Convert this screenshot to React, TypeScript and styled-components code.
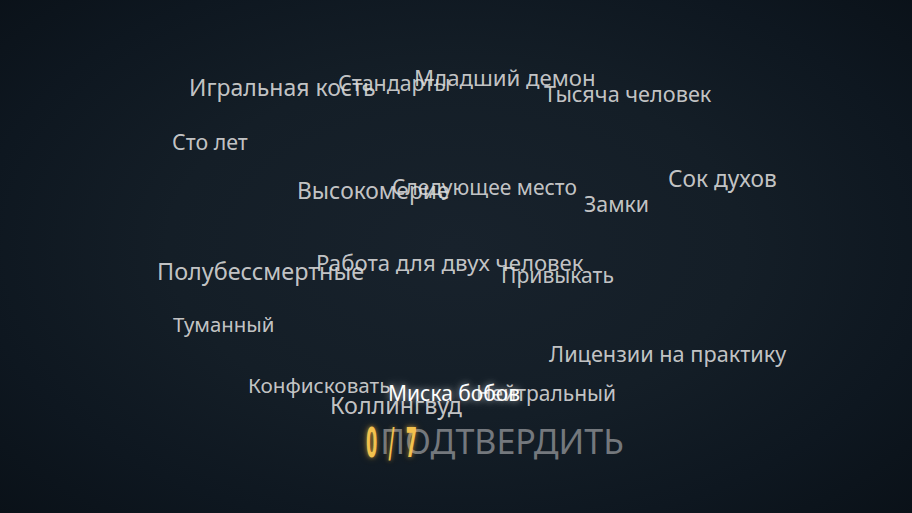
import React from "react";
import styled, { createGlobalStyle } from "styled-components";

const GlobalStyle = createGlobalStyle`
  html, body {
    margin: 0;
    padding: 0;
    width: 100%;
    height: 100%;
    overflow: hidden;
    background: #0b131a;
  }
  #root {
    width: 100%;
    height: 100%;
  }
`;

const Stage = styled.main`
  display: grid;
  width: 912px;
  height: 513px;
  overflow: hidden;
  background: radial-gradient(
    ellipse 70% 75% at 50% 48%,
    #18222c 0%,
    #141e27 45%,
    #0e1720 75%,
    #0a1118 100%
  );
  font-family: "Noto Sans", "Open Sans", sans-serif;
`;

const WordField = styled.section`
  grid-area: 1 / 1;
  position: relative;
`;

type WordProps = {
  $x: number;
  $base: number;
  $size: number;
  $picked?: boolean;
};

const Word = styled.span<WordProps>`
  position: absolute;
  left: ${(p) => p.$x}px;
  top: calc(${(p) => p.$base}px - 0.89em);
  font-size: ${(p) => p.$size}px;
  line-height: 1;
  white-space: nowrap;
  color: ${(p) => (p.$picked ? "#ffffff" : "rgba(218, 218, 218, 0.9)")};
  text-shadow: ${(p) =>
    p.$picked
      ? "0 0 6px rgba(255,255,255,0.55), 0 0 14px rgba(255,255,255,0.25)"
      : "none"};
  z-index: ${(p) => (p.$picked ? 2 : 1)};
  cursor: pointer;
`;

const Footer = styled.footer`
  grid-area: 1 / 1;
  align-self: end;
  display: flex;
  justify-content: center;
  align-items: center;
  padding: 0 0 52px 78px;
  z-index: 3;
`;

const Counter = styled.span`
  position: relative;
  top: 2px;
  z-index: 2;
  width: 50px;
  margin-right: -36px;
  font-family: "DejaVu Sans Condensed", "DejaVu Sans", sans-serif;
  font-weight: bold;
  font-size: 40px;
  line-height: 1;
  letter-spacing: 25px;
  white-space: nowrap;
  color: #f3c24e;
  text-shadow: 0 0 6px rgba(243, 180, 60, 0.65), 0 0 14px rgba(243, 180, 60, 0.3);
  transform: scaleX(0.45);
  transform-origin: left center;
`;

const ConfirmButton = styled.button`
  border: 0;
  padding: 0;
  background: none;
  font-family: "Noto Sans", "Open Sans", sans-serif;
  font-size: 34px;
  line-height: 1;
  color: #74787d;
  cursor: pointer;
`;

type Item = { text: string; x: number; base: number; size: number; picked?: boolean };

const words: Item[] = [
  { text: "Игральная кость", x: 189, base: 96, size: 23 },
  { text: "Стандарты", x: 338, base: 91, size: 21.4 },
  { text: "Младший демон", x: 414, base: 87, size: 22.2 },
  { text: "Тысяча человек", x: 544, base: 102, size: 21.7 },
  { text: "Сто лет", x: 172, base: 150, size: 21.4 },
  { text: "Высокомерие", x: 297, base: 200, size: 22.8 },
  { text: "Следующее место", x: 392, base: 196, size: 21 },
  { text: "Замки", x: 584, base: 212, size: 21.3 },
  { text: "Сок духов", x: 668, base: 188, size: 22.7 },
  { text: "Полубессмертные", x: 157, base: 281, size: 23.4 },
  { text: "Работа для двух человек", x: 316, base: 272, size: 22.2 },
  { text: "Привыкать", x: 501, base: 283, size: 21.1 },
  { text: "Туманный", x: 173, base: 332, size: 20.4 },
  { text: "Лицензии на практику", x: 549, base: 362, size: 21.7 },
  { text: "Конфисковать", x: 248, base: 393, size: 20.7 },
  { text: "Нейтральный", x: 476, base: 402, size: 21 },
  { text: "Коллингвуд", x: 330, base: 415, size: 23.3 },
  { text: "Миска бобов", x: 388, base: 402, size: 21, picked: true },
];

export default function App() {
  return (
    <>
      <GlobalStyle />
      <Stage>
        <WordField>
          {words.map((w) => (
            <Word key={w.text} $x={w.x} $base={w.base} $size={w.size} $picked={w.picked}>
              {w.text}
            </Word>
          ))}
        </WordField>
        <Footer>
          <Counter>0/7</Counter>
          <ConfirmButton>ПОДТВЕРДИТЬ</ConfirmButton>
        </Footer>
      </Stage>
    </>
  );
}
